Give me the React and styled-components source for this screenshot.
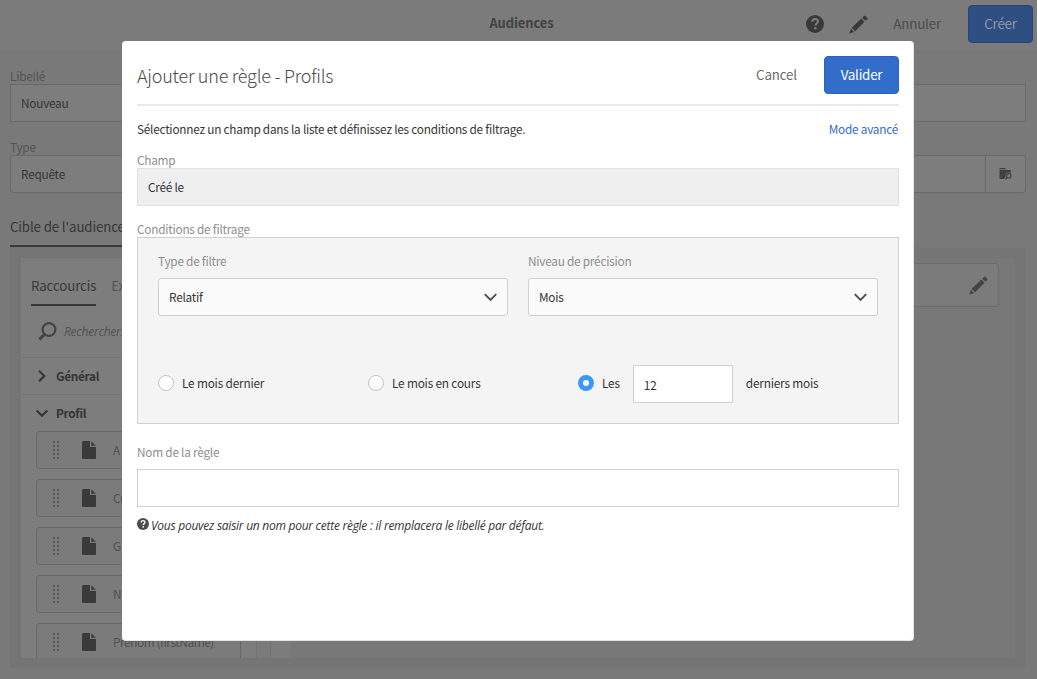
import React from 'react';
import styled, { createGlobalStyle, css } from 'styled-components';

const GlobalStyle = createGlobalStyle`
  *, *::before, *::after { box-sizing: border-box; }
  html, body { margin: 0; height: 100%; overflow: hidden; }
  body {
    background: #797979;
    color: #353535;
    font-family: "Noto Sans CJK SC", "Liberation Sans", sans-serif;
    font-size: 11.8px;
    letter-spacing: -0.02em;
    line-height: 18px;
  }
  button, input { font: inherit; letter-spacing: inherit; color: inherit; margin: 0; }
  p, h1, h2 { margin: 0; }
`;

const italic = css`
  font-family: "Open Sans", "Noto Sans", sans-serif;
  font-style: italic;
`;

/* ---------- page behind the dialog ---------- */

const Page = styled.div`
  position: relative;
  width: 1037px;
  height: 679px;
  overflow: hidden;
  background: #797979;
`;

const TopBar = styled.header`
  display: grid;
  grid-template-columns: 1fr auto 1fr;
  align-items: center;
  height: 52px;
  padding: 0 4px 3px 10px;
  background: #7b7b7b;
  border-bottom: 1px solid #757575;
`;

const PageTitle = styled.h1`
  grid-column: 2;
  font-size: 12.9px;
  line-height: 18px;
  padding-bottom: 2px;
  font-weight: 700;
  color: #424242;
  letter-spacing: -0.005em;
`;

const TopActions = styled.div`
  display: flex;
  justify-content: flex-end;
  align-items: center;
  color: #393939;
`;

const TopIcon = styled.span`
  display: flex;
  margin-right: 25px;
`;

const QuietButton = styled.button`
  padding: 0 0 1px;
  border: 0;
  background: none;
  font-size: 13.3px;
  letter-spacing: -0.01em;
  color: ${(p) => (p.$dimmed ? '#4c4c4c' : '#6b6b6b')};
  margin-right: 27px;
`;

const PrimaryButton = styled.button`
  width: ${(p) => p.$width}px;
  height: 38px;
  padding: 0 0 2px;
  border: 1px solid ${(p) => (p.$dimmed ? '#27457a' : '#2765c4')};
  border-radius: 4px;
  background: ${(p) => (p.$dimmed ? '#2f4e82' : '#326dc9')};
  color: ${(p) => (p.$dimmed ? '#8f98a8' : '#fff')};
  font-size: 13.4px;
`;

const PageForm = styled.div`
  padding: 15px 11px 0 10px;
`;

const PageField = styled.div`
  margin-bottom: 16px;
`;

const PageLabel = styled.div`
  height: 17px;
  line-height: 17px;
  color: #545454;
`;

const PageInput = styled.div`
  display: flex;
  align-items: center;
  height: 38px;
  padding-left: 10px;
  border: 1px solid #6a6a6a;
  border-radius: ${(p) => (p.$rounded ? 3 : 0)}px;
  background: #7d7d7d;
`;

const Addon = styled.span`
  display: flex;
  align-items: center;
  justify-content: center;
  width: 40px;
  height: 36px;
  margin-left: auto;
  border-left: 1px solid #6a6a6a;
  color: #414141;
`;

const TargetTab = styled.div`
  width: 124px;
  height: 38px;
  line-height: 35px;
  border-bottom: 2px solid #393939;
  font-size: 13.3px;
  letter-spacing: -0.01em;
  white-space: nowrap;
`;

const Builder = styled.div`
  display: flex;
  height: 421px;
  padding: 11px 11px 10px;
  background: #757575;
`;

const Palette = styled.aside`
  width: 236px;
  height: 400px;
  overflow: hidden;
  background: #7d7d7d;
  border-right: 1px solid #747474;
`;

const Gutter = styled.div`
  width: ${(p) => p.$width}px;
  background: ${(p) => p.$tone};
  border-right: ${(p) => (p.$line ? '1px solid #747474' : '0')};
`;

const Workspace = styled.div`
  flex: 1;
  padding: 5px 16px 0 15px;
  background: #787878;
`;

const WorkspaceCard = styled.div`
  display: flex;
  align-items: center;
  justify-content: flex-end;
  height: 44px;
  padding-right: 10px;
  border: 1px solid #6b6b6b;
  border-radius: 3px;
  background: #7b7b7b;
  color: #434343;
`;

const PaletteTabs = styled.div`
  display: flex;
  gap: 15px;
  padding: 10px 0 0 10px;
`;

const PaletteTab = styled.div`
  height: 38px;
  line-height: 36px;
  font-size: 13.3px;
  letter-spacing: -0.01em;
  color: ${(p) => (p.$active ? '#393939' : '#555')};
  border-bottom: 2px solid ${(p) => (p.$active ? '#393939' : 'transparent')};
`;

const Search = styled.div`
  display: flex;
  align-items: center;
  gap: 7px;
  height: 52px;
  padding: 0 0 0 17px;
  border-bottom: 1px solid #727272;
  color: #444;
`;

const Placeholder = styled.span`
  ${italic}
  font-size: 12px;
  letter-spacing: -0.02em;
  color: #535353;
`;

const GroupRow = styled.div`
  display: flex;
  align-items: center;
  height: ${(p) => (p.$line ? 37 : 36)}px;
  padding-left: 15px;
  border-bottom: ${(p) => (p.$line ? '1px solid #727272' : '0')};
  font-weight: 700;
  letter-spacing: -0.025em;
  svg { margin-right: 8px; }
`;

const ItemList = styled.div`
  display: grid;
  gap: 10px;
  padding: 0 15px;
`;

const Item = styled.div`
  display: flex;
  align-items: center;
  height: 38px;
  padding-left: 16px;
  border: 1px solid #686868;
  border-radius: 3px;
  background: #7b7b7b;
  color: #505050;
  letter-spacing: -0.035em;
  white-space: nowrap;
`;

const ItemIcon = styled.span`
  display: flex;
  margin: 0 17px 0 22px;
  color: #3a3a3a;
`;

/* ---------- dialog ---------- */

const Dialog = styled.section`
  position: absolute;
  left: 122px;
  top: 41px;
  width: 792px;
  height: 600px;
  padding: 15px 14px 0 15px;
  border: solid #e4e4e4;
  border-width: 0 1px 1px 0;
  border-radius: 4px;
  background: #fff;
`;

const DialogHeader = styled.div`
  display: flex;
  align-items: center;
  height: 50px;
  padding-bottom: 10px;
  border-bottom: 2px solid #eaeaea;
`;

const DialogTitle = styled.h2`
  flex: 1;
  font-size: 18px;
  font-weight: 300;
  line-height: 28px;
  letter-spacing: -0.013em;
  color: #4b4b4b;
`;

const Intro = styled.div`
  display: flex;
  justify-content: space-between;
  margin: 14px 0 13px;
  height: 18px;
  line-height: 18px;
`;

const ModeLink = styled.a`
  margin-right: 1px;
  color: #326dc9;
`;

const Label = styled.div`
  height: ${(p) => p.$height}px;
  line-height: ${(p) => (p.$height > 20 ? 16 : 18)}px;
  color: #8e8e8e;
`;

const LockedField = styled.div`
  height: 38px;
  padding-left: 10px;
  line-height: 36px;
  border: 1px solid #e1e1e1;
  background: #efefef;
  margin-bottom: 14px;
`;

const Conditions = styled.div`
  height: 187px;
  padding: 15px 20px 0;
  border: 1px solid #d0d0d0;
  background: #f4f4f4;
  margin-bottom: 20px;
`;

const SelectRow = styled.div`
  display: grid;
  grid-template-columns: 350px 350px;
  gap: 20px;
`;

const Select = styled.div`
  display: flex;
  align-items: center;
  justify-content: space-between;
  height: 38px;
  padding: 0 10px;
  border: 1px solid #d0d0d0;
  border-radius: 3px;
  background: #fafafa;
`;

const RadioRow = styled.div`
  display: grid;
  grid-template-columns: 210px 210px 1fr;
  align-items: center;
  margin-top: 49px;
`;

const Choice = styled.label`
  display: flex;
  align-items: center;
  gap: 8px;
  letter-spacing: -0.015em;
`;

const ChoiceText = styled.span`
  padding-bottom: 2px;
`;

const Radio = styled.span`
  width: 16px;
  height: 16px;
  margin-top: -2px;
  border-radius: 50%;
  border: ${(p) => (p.$checked ? '5px solid #3a97fb' : '1px solid #c4c4c4')};
  background: #fff;
`;

const CountInput = styled.input`
  width: 100px;
  height: 38px;
  margin: 0 5px;
  padding: 0 10px;
  border: 1px solid #d0d0d0;
  background: #fff;
`;

const NameInput = styled.input`
  display: block;
  width: 100%;
  height: 38px;
  padding: 0 10px;
  border: 1px solid #d0d0d0;
  background: #fff;
`;

const Hint = styled.p`
  ${italic}
  display: flex;
  align-items: center;
  gap: 2px;
  margin-top: 10px;
  font-size: 12px;
  letter-spacing: -0.022em;
  svg { margin-top: -4px; }
`;

/* ---------- icons ---------- */

const HelpIcon = ({ size, mark = '#7b7b7b', fill = 'currentColor' }) => (
  <svg width={size} height={size} viewBox="0 0 18 18">
    <circle cx="9" cy="9" r="9" fill={fill} />
    <path d="M6.3 6.8C6.3 5 7.5 4 9.1 4c1.7 0 2.8 1 2.8 2.4 0 2-2.5 2.1-2.5 4.2" fill="none" stroke={mark} strokeWidth="2" />
    <circle cx="9.3" cy="13.2" r="1.3" fill={mark} />
  </svg>
);

const PencilIcon = () => (
  <svg width="19" height="19" viewBox="0 0 19 19" fill="currentColor">
    <path d="M2.7 12.8 12.4 3.6l3.1 3.1-9.4 9.6zM1.9 13.8l3.2 3.2L.3 18.6zM13.3 2.7 15 1c.5-.5.9-.5 1.4 0l1.8 1.8c.5.5.5.9 0 1.4l-1.8 1.6z" />
  </svg>
);

const Chevron = ({ right }) => (
  <svg width="12" height="12" viewBox="0 0 12 12" fill="none" stroke="currentColor" strokeWidth="2.1">
    <path d={right ? 'M3 .8 8.3 6 3 11.2' : 'M.6 3.4 6 8.8l5.4-5.4'} />
  </svg>
);

const SelectArrow = () => (
  <svg width="13" height="9" viewBox="0 0 13 9" fill="none" stroke="#4b4b4b" strokeWidth="1.9">
    <path d="M.8 1.2 6.5 7l5.7-5.8" />
  </svg>
);

const SearchIcon = () => (
  <svg width="19" height="19" viewBox="0 0 19 19" fill="none" stroke="currentColor">
    <circle cx="11" cy="7.5" r="6.4" strokeWidth="2.2" />
    <path d="m6.6 12.2-5.2 5.2" strokeWidth="3" />
  </svg>
);

const FileIcon = () => (
  <svg width="14" height="18" viewBox="0 0 14 18" fill="currentColor">
    <path d="M1 0h7v6h6v11a1 1 0 0 1-1 1H1a1 1 0 0 1-1-1V1a1 1 0 0 1 1-1zM9.3.2 13.8 4.8H9.3z" />
  </svg>
);

const GripIcon = () => (
  <svg width="7" height="18" viewBox="0 0 7 18" fill="#585858">
    {[0, 4, 8, 12, 16].map((y) => (
      <React.Fragment key={y}>
        <rect x="0" y={y} width="2" height="2" />
        <rect x="4" y={y} width="2" height="2" />
      </React.Fragment>
    ))}
  </svg>
);

const FolderSearchIcon = () => (
  <svg width="13" height="12" viewBox="0 0 13 12">
    <path d="M.5 0h5.6l.6 1.2H.5zM.5 2.1h11.2v9H.5z" fill="currentColor" />
    <circle cx="9.8" cy="7.8" r="3.3" fill="#7d7d7d" />
    <path d="M8.800 9 5.800 12.200" stroke="#7d7d7d" strokeWidth="3" />
    <circle cx="9.800" cy="7.800" r="2.200" fill="none" stroke="currentColor" strokeWidth="1.100" />
    <path d="M8.300 9.400 6.500 11.300" stroke="currentColor" strokeWidth="1.300" />
  </svg>
);

const ITEMS = ['A', 'Cr', 'G', 'N', 'Prénom (firstName)'];

export default function App() {
  return (
    <Page>
      <GlobalStyle />
      <TopBar>
        <PageTitle>Audiences</PageTitle>
        <TopActions>
          <TopIcon><HelpIcon size={18} /></TopIcon>
          <TopIcon><PencilIcon /></TopIcon>
          <QuietButton $dimmed>Annuler</QuietButton>
          <PrimaryButton $dimmed $width={65}>Créer</PrimaryButton>
        </TopActions>
      </TopBar>
      <PageForm>
        <PageField>
          <PageLabel>Libellé</PageLabel>
          <PageInput>Nouveau</PageInput>
        </PageField>
        <PageField>
          <PageLabel>Type</PageLabel>
          <PageInput $rounded>
            Requête
            <Addon><FolderSearchIcon /></Addon>
          </PageInput>
        </PageField>
        <TargetTab>Cible de l'audience</TargetTab>
        <Builder>
          <Palette>
            <PaletteTabs>
              <PaletteTab $active>Raccourcis</PaletteTab>
              <PaletteTab>Ex</PaletteTab>
            </PaletteTabs>
            <Search>
              <SearchIcon />
              <Placeholder>Rechercher...</Placeholder>
            </Search>
            <GroupRow $line><Chevron right />Général</GroupRow>
            <GroupRow><Chevron />Profil</GroupRow>
            <ItemList>
              {ITEMS.map((name) => (
                <Item key={name}>
                  <GripIcon />
                  <ItemIcon><FileIcon /></ItemIcon>
                  {name}
                </Item>
              ))}
            </ItemList>
          </Palette>
          <Gutter $width={14} $tone="#7b7b7b" $line />
          <Gutter $width={20} $tone="#7c7c7c" />
          <Workspace>
            <WorkspaceCard><PencilIcon /></WorkspaceCard>
          </Workspace>
        </Builder>
      </PageForm>

      <Dialog>
        <DialogHeader>
          <DialogTitle>Ajouter une règle - Profils</DialogTitle>
          <QuietButton>Cancel</QuietButton>
          <PrimaryButton $width={75}>Valider</PrimaryButton>
        </DialogHeader>
        <Intro>
          <span>Sélectionnez un champ dans la liste et définissez les conditions de filtrage.</span>
          <ModeLink>Mode avancé</ModeLink>
        </Intro>
        <Label $height={17}>Champ</Label>
        <LockedField>Créé le</LockedField>
        <Label $height={17}>Conditions de filtrage</Label>
        <Conditions>
          <SelectRow>
            <div>
              <Label $height={25}>Type de filtre</Label>
              <Select>Relatif<SelectArrow /></Select>
            </div>
            <div>
              <Label $height={25}>Niveau de précision</Label>
              <Select>Mois<SelectArrow /></Select>
            </div>
          </SelectRow>
          <RadioRow>
            <Choice><Radio /><ChoiceText>Le mois dernier</ChoiceText></Choice>
            <Choice><Radio /><ChoiceText>Le mois en cours</ChoiceText></Choice>
            <Choice>
              <Radio $checked />
              <ChoiceText>Les</ChoiceText>
              <CountInput defaultValue="12" />
              <ChoiceText>derniers mois</ChoiceText>
            </Choice>
          </RadioRow>
        </Conditions>
        <Label $height={25}>Nom de la règle</Label>
        <NameInput />
        <Hint>
          <HelpIcon size={12} mark="#fff" fill="#4b4b4b" />
          Vous pouvez saisir un nom pour cette règle : il remplacera le libellé par défaut.
        </Hint>
      </Dialog>
    </Page>
  );
}
